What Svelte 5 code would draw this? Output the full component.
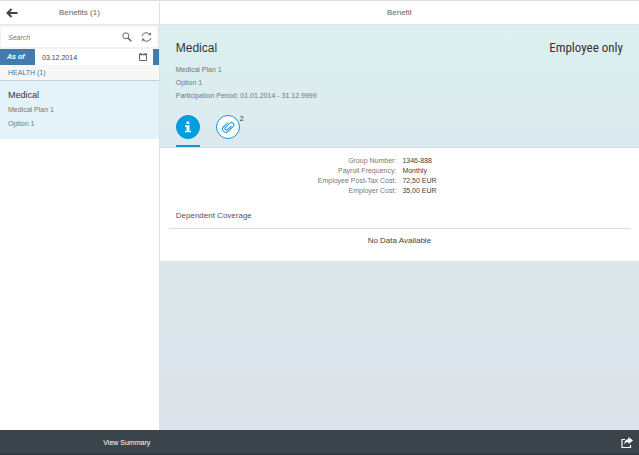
<script lang="ts">
  interface Plan {
    title: string;
    plan: string;
    option: string;
  }

  const plans: Plan[] = [{ title: 'Medical', plan: 'Medical Plan 1', option: 'Option 1' }];

  const details = [
    { label: 'Group Number', value: '1346-888' },
    { label: 'Payroll Frequency', value: 'Monthly' },
    { label: 'Employee Post-Tax Cost', value: '72,50 EUR' },
    { label: 'Employer Cost', value: '35,00 EUR' }
  ];

  let search = $state('');
  let asOf = $state('03.12.2014');
  let tab = $state('info');
</script>

<div class="app">
  <div class="columns">
    <aside class="master">
      <header class="bar">
        <button class="icon-button back" aria-label="Back">
          <svg width="12" height="10" viewBox="0 0 12 10" fill="none" stroke="#444" stroke-width="2">
            <path d="M11.5 5H2M5.5 1L1.5 5L5.5 9" />
          </svg>
        </button>
        <h1>Benefits (1)</h1>
      </header>

      <div class="search">
        <input type="text" placeholder="Search" aria-label="Search" bind:value={search} />
        <button class="icon-button" aria-label="Search benefits">
          <svg width="10" height="10" viewBox="0 0 10 10" fill="none" stroke="#666">
            <circle cx="3.8" cy="3.8" r="3" />
            <path d="M6 6L9.3 9.3" stroke-width="1.6" />
          </svg>
        </button>
        <button class="icon-button" aria-label="Refresh">
          <svg width="11" height="10" viewBox="0 0 11 10" fill="none" stroke="#666">
            <path d="M1 4A4.5 4.2 0 0 1 8.8 2.2M10 6A4.5 4.2 0 0 1 2.2 7.8" />
            <path d="M10 0.5V3.3H7ZM1 9.5V6.7H4Z" fill="#666" stroke="none" />
          </svg>
        </button>
      </div>

      <div class="as-of">
        <label for="as-of">As of</label>
        <div class="date">
          <input id="as-of" type="text" bind:value={asOf} />
          <button class="icon-button" aria-label="Open calendar">
            <svg width="8" height="8" viewBox="0 0 8 8" fill="none" stroke="#666">
              <path d="M0.5 1.5H7.5V7.5H0.5Z" />
              <path d="M0 1.5H8M1.5 0V2M6.5 0V2" stroke-width="1.4" />
            </svg>
          </button>
        </div>
      </div>

      <h2 class="group">HEALTH (1)</h2>
      <ul>
        {#each plans as item}
          <li>
            <a href="#medical">
              <strong>{item.title}</strong>
              <span>{item.plan}</span>
              <span>{item.option}</span>
            </a>
          </li>
        {/each}
      </ul>
    </aside>

    <main class="detail">
      <header class="bar">
        <h1>Benefit</h1>
      </header>

      <section class="summary">
        <div class="heading">
          <h2>Medical</h2>
          <span class="coverage">Employee only</span>
        </div>
        <p>Medical Plan 1</p>
        <p>Option 1</p>
        <p>Participation Period: 01.01.2014 - 31.12.9999</p>

        <div class="tabs">
          <button class="tab" class:selected={tab === 'info'} aria-label="Information" onclick={() => (tab = 'info')}>
            <span class="circle filled">
              <svg width="8" height="12" viewBox="0 0 8 12" fill="#fff">
                <path d="M2.5 0.5H5.3V3H2.5ZM1 4.3H5.5V9.7H7V11.3H1V9.7H2.5V5.9H1Z" />
              </svg>
            </span>
          </button>
          <button class="tab" class:selected={tab === 'files'} aria-label="Attachments" onclick={() => (tab = 'files')}>
            <span class="circle">
              <svg width="14" height="14" viewBox="0 0 14 14" fill="none" stroke="#0d97d8" stroke-linecap="round">
                <path transform="rotate(47 7 7)" d="M8.6 4.2V9.2A1.5 1.5 0 0 1 5.6 9.2V3A2.3 2.3 0 0 1 10.2 3V10A3.2 3.2 0 0 1 3.8 10V4.2" />
              </svg>
            </span>
            <span class="count">2</span>
          </button>
        </div>
      </section>

      <section class="content">
        <dl>
          {#each details as row}
            <dt>{row.label}:</dt>
            <dd>{row.value}</dd>
          {/each}
        </dl>
        <h3>Dependent Coverage</h3>
        <div class="empty">No Data Available</div>
      </section>
    </main>
  </div>

  <footer>
    <div class="footer-left">
      <button class="text-button">View Summary</button>
    </div>
    <button class="icon-button" aria-label="Share">
      <svg width="12" height="11" viewBox="0 0 12 11" fill="none" stroke="#fff">
        <path d="M4 2.5H1V10.5H9.5V8" stroke-width="1.2" />
        <path d="M7.5 0L12 3.6L7.5 7V5C5.5 5 4.2 5.7 3.2 7.4C3.3 4.4 4.8 2.4 7.5 2.1Z" fill="#fff" stroke="none" />
      </svg>
    </button>
  </footer>
</div>

<style>
  :global(body) {
    font-family: "Liberation Sans", Arial, sans-serif;
    font-size: 7px;
    color: #444;
  }

  .app {
    display: flex;
    flex-direction: column;
    min-height: 100vh;
  }

  .columns {
    flex: 1;
    display: grid;
    grid-template-columns: 1fr 3fr;
  }

  h1, h2, h3, p, ul, dl, dd {
    margin: 0;
    padding: 0;
    font-weight: normal;
  }

  button, input {
    font: inherit;
    color: inherit;
    padding: 0;
    border: none;
    background: none;
  }

  input {
    min-width: 0;
    flex: 1;
    outline: none;
  }

  button {
    cursor: pointer;
  }

  .icon-button {
    display: flex;
    align-items: center;
    justify-content: center;
    flex-shrink: 0;
  }

  .bar {
    display: flex;
    align-items: center;
    justify-content: center;
    position: relative;
    box-sizing: border-box;
    height: 25px;
    border-top: 1px solid #ddd;
    border-bottom: 1px solid #e4e8e8;
    background: #fff;
  }

  .bar h1 {
    font-size: 8px;
    color: #666;
  }

  .back {
    position: absolute;
    left: 6px;
  }

  .master {
    border-right: 1px solid #dde3e6;
    background: #fff;
  }

  .search {
    display: flex;
    align-items: center;
    gap: 9px;
    height: 20px;
    padding: 0 5px 0 7px;
    border: 2px solid #f2f2f2;
    border-left-width: 1px;
  }

  .search input::placeholder {
    color: #777;
    font-style: italic;
    opacity: 1;
  }

  .as-of {
    display: flex;
    align-items: stretch;
    height: 16px;
    padding-right: 6px;
    background: #427cac;
  }

  .as-of label {
    width: 28px;
    padding-left: 7px;
    line-height: 16px;
    font-style: italic;
    font-weight: bold;
    color: #fff;
  }

  .date {
    flex: 1;
    display: flex;
    align-items: center;
    min-width: 0;
    padding: 0 6px 0 7px;
    background: #fff;
  }

  .group {
    padding-left: 8px;
    border-bottom: 1px solid #c3d3dd;
    background: #f7f7f7;
    font-size: 7px;
    line-height: 15px;
    color: #3d78a8;
  }

  ul {
    list-style: none;
  }

  li a {
    display: flex;
    flex-direction: column;
    padding: 7px 8px 8px;
    background: #e4f2f9;
    color: #777;
    line-height: 14px;
    text-decoration: none;
  }

  li strong {
    font-size: 9px;
    font-weight: normal;
    line-height: 15px;
    color: #333;
  }

  .detail {
    background: linear-gradient(#dceef0, #dce3ea);
  }

  .summary {
    padding: 14px 16px 0;
    border-bottom: 1px solid #cfdde0;
    background: linear-gradient(#dcf0ef, #dceaef);
    color: #707878;
  }

  .heading {
    display: flex;
    justify-content: space-between;
    margin-bottom: 6px;
    line-height: 18px;
    color: #333;
  }

  .heading h2 {
    font-size: 12px;
    line-height: 18px;
  }

  .coverage {
    font-family: "Liberation Sans Narrow", "Arial Narrow", "Roboto Condensed", Roboto, sans-serif;
    font-size: 13px;
  }

  .summary p {
    line-height: 13px;
  }

  .tabs {
    display: flex;
    gap: 16px;
    margin-top: 13px;
  }

  .tab {
    position: relative;
    border-bottom: 2px solid transparent;
  }

  .tab.selected {
    border-bottom-color: #0d97d8;
  }

  .circle {
    display: flex;
    align-items: center;
    justify-content: center;
    box-sizing: border-box;
    width: 24px;
    height: 24px;
    margin-bottom: 6px;
    border: 1px solid #0d97d8;
    border-radius: 50%;
    background: #fff;
  }

  .filled {
    background: #009de0;
  }

  .count {
    position: absolute;
    top: 0;
    left: 24px;
    color: #333;
  }

  .content {
    padding: 8px 9px 0;
    background: #fff;
  }

  dl {
    display: grid;
    grid-template-columns: 1fr 1fr;
    column-gap: 6px;
    padding: 0 7px;
    line-height: 10px;
  }

  dt {
    text-align: right;
    color: #777;
  }

  h3 {
    margin-top: 7px;
    padding: 0 7px;
    border-bottom: 1px solid #ddd;
    font-size: 8px;
    line-height: 25px;
    color: #555;
  }

  .empty {
    padding: 4px 0 12px;
    font-size: 8px;
    line-height: 16px;
    text-align: center;
  }

  footer {
    display: flex;
    align-items: center;
    justify-content: space-between;
    height: 25px;
    padding-right: 6px;
    background: linear-gradient(#3b444b 90%, #26323d);
    color: #fff;
  }

  .footer-left {
    width: 25%;
    padding-right: 8px;
    box-sizing: border-box;
    text-align: right;
  }

  .text-button {
    font-size: 7px;
  }
</style>
